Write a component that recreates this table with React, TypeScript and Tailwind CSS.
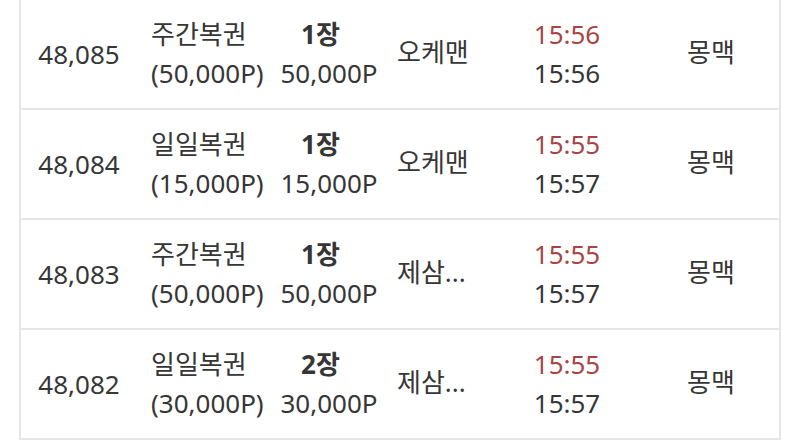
const rows = [
  { no: '48,085', name: '주간복권', price: '(50,000P)', qty: '1장', total: '50,000P', buyer: '오케맨', t1: '15:56', t2: '15:56', seller: '몽맥' },
  { no: '48,084', name: '일일복권', price: '(15,000P)', qty: '1장', total: '15,000P', buyer: '오케맨', t1: '15:55', t2: '15:57', seller: '몽맥' },
  { no: '48,083', name: '주간복권', price: '(50,000P)', qty: '1장', total: '50,000P', buyer: '제삼...', t1: '15:55', t2: '15:57', seller: '몽맥' },
  { no: '48,082', name: '일일복권', price: '(30,000P)', qty: '2장', total: '30,000P', buyer: '제삼...', t1: '15:55', t2: '15:57', seller: '몽맥' },
];

export default function App() {
  return (
    <div
      className="w-[800px] h-[440px] bg-white overflow-hidden text-[#363636] text-[26px] leading-[39px]"
      style={{ fontFamily: '"Noto Sans", "Noto Sans CJK KR", sans-serif' }}
    >
      <div className="mx-[19px] border-x-2 border-[#e6e6e6]">
        {rows.map((r, i) => (
          <div key={i} className="flex h-[110px] border-b-2 border-[#e6e6e6] items-center">
            {/* 번호 */}
            <div className="w-[116px] text-center">{r.no}</div>

            {/* 상품 */}
            <div className="w-[140px] pl-[14px] flex flex-col">
              <span>{r.name}</span>
              <span>{r.price}</span>
            </div>

            {/* 수량 / 금액 */}
            <div className="w-[104px] flex flex-col items-center">
              <span className="font-bold mr-[17px]">{r.qty}</span>
              <span>{r.total}</span>
            </div>

            {/* 구매자 */}
            <div className="w-[120px] pl-[16px] -mt-[4px]">{r.buyer}</div>

            {/* 시간 */}
            <div className="w-[132px] flex flex-col items-center">
              <span className="text-[#a84444]">{r.t1}</span>
              <span>{r.t2}</span>
            </div>

            {/* 판매자 */}
            <div className="flex-1 pl-[10px] text-center -mt-[4px]">{r.seller}</div>
          </div>
        ))}
      </div>
    </div>
  );
}
